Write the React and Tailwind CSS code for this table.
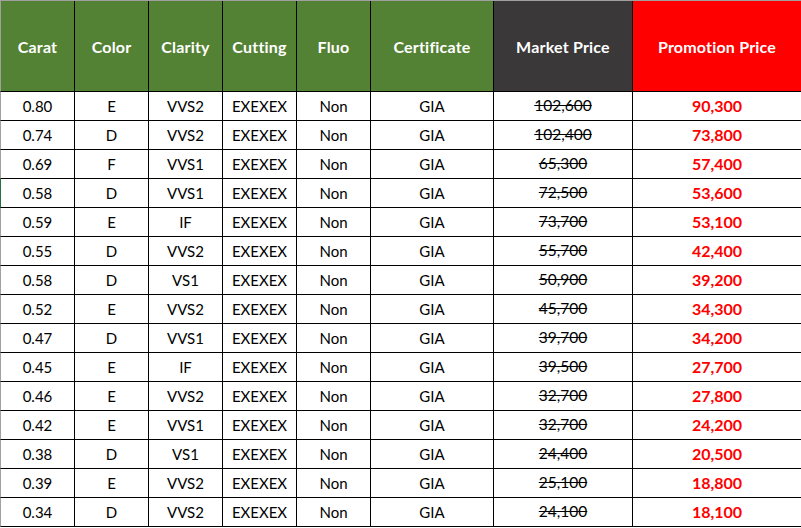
const ROWS = [
  ["0.80", "E", "VVS2", "102,600", "90,300"],
  ["0.74", "D", "VVS2", "102,400", "73,800"],
  ["0.69", "F", "VVS1", "65,300", "57,400"],
  ["0.58", "D", "VVS1", "72,500", "53,600"],
  ["0.59", "E", "IF", "73,700", "53,100"],
  ["0.55", "D", "VVS2", "55,700", "42,400"],
  ["0.58", "D", "VS1", "50,900", "39,200"],
  ["0.52", "E", "VVS2", "45,700", "34,300"],
  ["0.47", "D", "VVS1", "39,700", "34,200"],
  ["0.45", "E", "IF", "39,500", "27,700"],
  ["0.46", "E", "VVS2", "32,700", "27,800"],
  ["0.42", "E", "VVS1", "32,700", "24,200"],
  ["0.38", "D", "VS1", "24,400", "20,500"],
  ["0.39", "E", "VVS2", "25,100", "18,800"],
  ["0.34", "D", "VVS2", "24,100", "18,100"],
];

// column widths include the 1px right border
const COLS = ["w-[74px]", "w-[74px]", "w-[74px]", "w-[74px]", "w-[74px]", "w-[123px]", "w-[139px]", "w-[168px]"];

function Cell({ i, className = "", children }) {
  const edge = i < COLS.length - 1 ? "border-r border-black" : "";
  return (
    <div className={`${COLS[i]} shrink-0 flex items-center justify-center ${edge} ${className}`}>
      {children}
    </div>
  );
}

export default function App() {
  const headers = ["Carat", "Color", "Clarity", "Cutting", "Fluo", "Certificate"];

  return (
    <div
      className="w-[801px] h-[528px] bg-white overflow-hidden text-[15px] text-black"
      style={{ fontFamily: "Lato, 'Open Sans', sans-serif" }}
    >
      {/* header */}
      <div className="flex h-[92px] border-t border-l border-t-[#a0a0a0] border-l-[#a0a0a0] border-b border-b-black font-bold text-white text-[16px] tracking-[0.2px]">
        {headers.map((h, i) => (
          <Cell key={h} i={i} className="bg-[#548235] pt-px">
            {h}
          </Cell>
        ))}
        <Cell i={6} className="bg-[#3a3838] pt-px">Market Price</Cell>
        <Cell i={7} className="bg-[#ff0000] pt-px">Promotion Price</Cell>
      </div>

      {/* body */}
      {ROWS.map((r, idx) => (
        <div
          key={idx}
          className={`flex h-[29px] border-b border-b-black border-l ${idx === 3 ? "border-l-[#217346]" : "border-l-[#a0a0a0]"}`}
        >
          <Cell i={0}>{r[0]}</Cell>
          <Cell i={1}>{r[1]}</Cell>
          <Cell i={2}>{r[2]}</Cell>
          <Cell i={3}>EXEXEX</Cell>
          <Cell i={4}>Non</Cell>
          <Cell i={5}>GIA</Cell>
          <Cell i={6} className="text-[15.5px]">
            <span className="line-through">{r[3]}</span>
          </Cell>
          <Cell i={7} className="font-bold text-[16px] text-[#ff0000]">{r[4]}</Cell>
        </div>
      ))}
    </div>
  );
}
